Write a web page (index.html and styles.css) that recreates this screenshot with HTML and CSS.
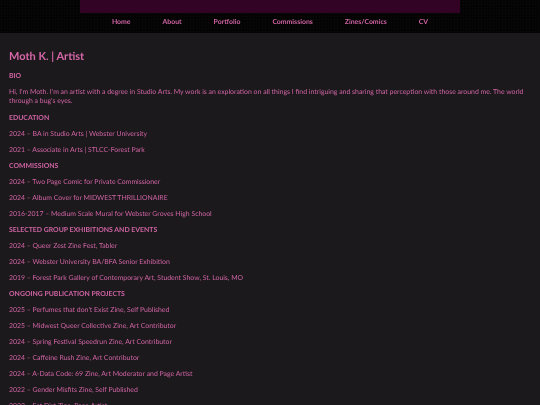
FILE: index.html
```html
<!DOCTYPE html>
<html lang="en">
<head>
<meta charset="utf-8">
<title>Moth K. | Artist</title>
<link rel="stylesheet" href="styles.css">
</head>
<body>
<header class="site-header">
  <div class="banner"></div>
  <nav class="nav">
    <a class="nav-link" href="#">Home</a>
    <a class="nav-link" href="#">About</a>
    <a class="nav-link" href="#">Portfolio</a>
    <a class="nav-link" href="#">Commissions</a>
    <a class="nav-link" href="#">Zines/Comics</a>
    <a class="nav-link" href="#">CV</a>
  </nav>
</header>
<main class="content">
  <h1 class="title">Moth K. | Artist</h1>
  <p class="head">BIO</p>
  <p class="line intro">Hi, I'm Moth. I'm an artist with a degree in Studio Arts. My work is an exploration on all things I find intriguing and sharing that perception with those around me. The world through a bug's eyes.</p>
  <p class="head">EDUCATION</p>
  <p class="line">2024 – BA in Studio Arts | Webster University</p>
  <p class="line">2021 – Associate in Arts | STLCC-Forest Park</p>
  <p class="head">COMMISSIONS</p>
  <p class="line">2024 – Two Page Comic for Private Commissioner</p>
  <p class="line">2024 – Album Cover for MIDWEST THRILLIONAIRE</p>
  <p class="line">2016-2017 – Medium Scale Mural for Webster Groves High School</p>
  <p class="head">SELECTED GROUP EXHIBITIONS AND EVENTS</p>
  <p class="line">2024 – Queer Zest Zine Fest, Tabler</p>
  <p class="line">2024 – Webster University BA/BFA Senior Exhibition</p>
  <p class="line">2019 – Forest Park Gallery of Contemporary Art, Student Show, St. Louis, MO</p>
  <p class="head">ONGOING PUBLICATION PROJECTS</p>
  <p class="line">2025 – Perfumes that don't Exist Zine, Self Published</p>
  <p class="line">2025 – Midwest Queer Collective Zine, Art Contributor</p>
  <p class="line">2024 – Spring Festival Speedrun Zine, Art Contributor</p>
  <p class="line">2024 – Caffeine Rush Zine, Art Contributor</p>
  <p class="line">2024 – A-Data Code: 69 Zine, Art Moderator and Page Artist</p>
  <p class="line">2022 – Gender Misfits Zine, Self Published</p>
  <p class="line">2022 – Eat Dirt Zine, Page Artist</p>
</main>
</body>
</html>
```
FILE: styles.css
```css
html, body {
  margin: 0;
  height: 405px;
  overflow: hidden;
  background: #1b191b;
}
body {
  font-family: Lato, "Noto Sans", sans-serif;
  color: #d064a5;
  font-size: 6.9px;
  text-rendering: geometricPrecision;
}
.site-header {
  height: 33px;
  background-color: #040404;
  background-image: radial-gradient(#0c0c0c 0.5px, transparent 0.6px);
  background-size: 3px 3px;
}
.banner {
  width: 380px;
  height: 13px;
  margin: 0 auto;
  background: #320325;
}
.nav {
  display: flex;
  justify-content: center;
  gap: 32px;
  padding-top: 4px;
  filter: blur(0.25px);
}
.nav-link {
  color: #d064a5;
  font-weight: 700;
  line-height: 11px;
  text-decoration: none;
}
.content {
  padding: 0 9px;
  filter: blur(0.25px);
}
.title {
  margin: 16px 0 0;
  font-size: 11px;
  line-height: 15px;
  font-weight: 700;
  color: #d566a8;
}
.head, .line {
  margin: 7px 0 0;
  line-height: 9px;
}
.head {
  font-weight: 700;
}
.title + .head {
  margin-top: 8px;
}
.intro {
  margin: 7px 0 8px;
}
```
